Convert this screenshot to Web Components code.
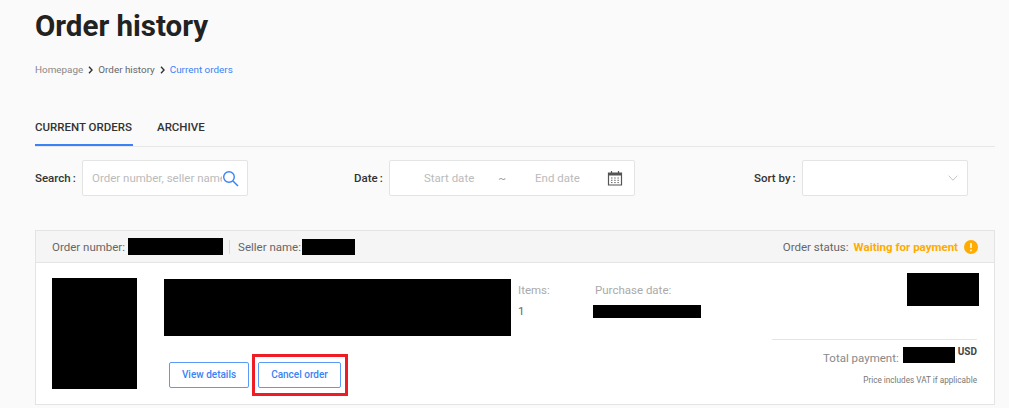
<!DOCTYPE html>
<html><head><meta charset="utf-8"><style>
html,body{margin:0;height:408px;overflow:hidden;background:#fafafa;font-family:Roboto,"Liberation Sans",sans-serif}
</style></head><body>
<order-page></order-page>
<script>
const def=(name,html)=>customElements.define(name,class extends HTMLElement{constructor(){super();this.attachShadow({mode:'open'}).innerHTML=html}});
def('page-head',`<style>:host{display:block}
h1{margin:0;font:700 29.5px/32px Roboto,sans-serif;color:#222;padding-top:10px}
nav{display:flex;align-items:center;font-size:9.9px;line-height:12px;margin-top:22px;color:#888}
svg{width:5px;height:8px;margin:0 5px 0 5px}
.m{color:#666}.c{color:#3b82f6}</style>
<h1>Order history</h1>
<nav><span>Homepage</span><svg viewBox="0 0 5 8"><path d="M1 .8 4 4 1 7.2" fill="none" stroke="#333" stroke-width="1.4"/></svg><span class="m">Order history</span><svg viewBox="0 0 5 8"><path d="M1 .8 4 4 1 7.2" fill="none" stroke="#333" stroke-width="1.4"/></svg><span class="c">Current orders</span></nav>`);
def('order-tabs',`<style>:host{display:flex;gap:24px;margin-top:33px;border-bottom:1px solid #e8e8e8;margin-right:14px;height:37px;font:500 11.5px/16px Roboto,sans-serif;color:#333}
span{display:block;padding-top:10px;height:27px;white-space:nowrap}
.a{border-bottom:2px solid #3b82f6;height:25px;width:98px}</style>
<span class="a">CURRENT ORDERS</span><span>ARCHIVE</span>`);
def('filter-box',`<style>:host{display:flex;align-items:center;box-sizing:border-box;height:36px;background:#fff;border:1px solid #e4e4e4;border-radius:2px;font-size:11.5px;color:#bbb;overflow:hidden}</style><slot></slot>`);
def('filter-bar',`<style>:host{display:flex;align-items:center;margin-top:13px;height:36px;font:500 11.5px Roboto,sans-serif;color:#333}
b{font-weight:500;white-space:nowrap}
b u{text-decoration:none;margin-left:2px}
filter-box{font-weight:400;flex:none}
.s{width:166px;padding-left:9px}
.s span{width:130px;overflow:hidden;white-space:nowrap}
.s svg{width:17px;height:17px;flex:none}
.d{width:246px;padding-left:34px}
.d svg{width:16px;height:16px;margin-left:27px}
.d i{font-style:normal;margin:0 29px 0 24px;color:#999}
.o{width:166px;justify-content:flex-end;padding-right:9px}
.o svg{width:10px;height:6px}
.l0{width:47px}.l1{margin-left:106px;width:35px}.l2{margin-left:119px;width:48px}</style>
<b class="l0">Search<u>:</u></b><filter-box class="s"><span>Order number, seller name</span><svg viewBox="0 0 17 17"><circle cx="7" cy="7" r="5.3" fill="none" stroke="#3b82f6" stroke-width="1.4"/><path d="m11 11 5 5" stroke="#3b82f6" stroke-width="1.5"/></svg></filter-box>
<b class="l1">Date<u>:</u></b><filter-box class="d"><span>Start date</span><i>~</i><span>End date</span><svg viewBox="0 0 16 16"><path d="M1.5 3h13v12h-13z" fill="none" stroke="#555" stroke-width="1.2"/><path d="M1.5 3h13v2.6h-13z" fill="#555"/><path d="M4.5 1v3M11.5 1v3" stroke="#555" stroke-width="1.2"/><path d="M4 8h1.5M7.2 8h1.5M10.4 8h1.5M4 10.3h1.5M7.2 10.3h1.5M10.4 10.3h1.5M4 12.6h1.5M7.2 12.6h1.5M10.4 12.6h1.5" stroke="#666"/></svg></filter-box>
<b class="l2">Sort by<u>:</u></b><filter-box class="o"><svg viewBox="0 0 10 6"><path d="M.7.7 5 5.3 9.3.7" fill="none" stroke="#c4c4c4"/></svg></filter-box>`);
def('redact-box',`<style>:host{display:block;background:#000;flex:none}</style>`);
def('outline-button',`<style>:host{display:block;position:relative;box-sizing:border-box;height:26px;border:1px solid #5c9bf5;border-radius:2px;background:#fff;color:#3b82f6;font:500 10px/24px Roboto,sans-serif;text-align:center}
:host([marked])::after{content:"";position:absolute;left:-7px;right:-8px;top:-9px;bottom:-9px;border:3px solid #ee1c25;pointer-events:none}</style><slot></slot>`);
def('order-card',`<style>:host{display:block;margin:34px 14px 0 0;border:1px solid #e4e4e4;background:#fff;height:175px;box-sizing:border-box;color:#666;font:400 11.5px Roboto,sans-serif}
.h{display:flex;align-items:center;background:#f5f5f5;border-bottom:1px solid #e4e4e4;padding-left:16px;box-sizing:border-box;height:32px}
.sep{width:1px;height:14px;background:#ddd;margin:0 8px 0 6px}
.st{margin-left:auto;display:flex;align-items:center;padding-right:16px}
.st b{color:#ffab00;font-weight:700;margin-left:5px}
.st svg{width:14px;height:14px;margin-left:6px}
.b{display:flex;padding:15px 15px 0 16px}
.left{width:85px;height:111px;margin-right:27px}
.mid{width:347px;margin-right:7px;flex:none;padding-top:1px}
.btns{display:flex;gap:9px;margin:26px 0 0 5px}
.info{display:flex;padding-top:4px;color:#aaa;flex:none;line-height:16px}
.items{width:75px}.items p{margin:5px 0 0;color:#666}
.pd{width:108px}
.pd span{padding-left:2px}
.right{flex:1;display:flex;flex-direction:column;align-items:flex-end;margin-top:-5px}
.tot{width:205px;margin-top:33px;border-top:1px solid #e4e4e4;margin-right:2px;display:flex;justify-content:flex-end;padding-top:7px;color:#888}
.tot b{font-size:10px;font-weight:700;color:#444;margin:-1px 0 0 3px}
.tot span{line-height:16px;margin:3px 4px 0 0}
.vat{font-size:8.2px;color:#777;margin:9px 2px 0 0}</style>
<div class="h"><span>Order number:</span><redact-box style="width:95px;height:17px;margin-left:3px"></redact-box><span class="sep"></span><span>Seller name:</span><redact-box style="width:53px;height:16px;margin-left:1px"></redact-box>
<div class="st"><span>Order status:</span><b>Waiting for payment</b><svg viewBox="0 0 14 14"><circle cx="7" cy="7" r="7" fill="#ffab00"/><path d="M7 3v5M7 9.5v1.7" stroke="#fff" stroke-width="1.6"/></svg></div></div>
<div class="b"><redact-box class="left"></redact-box>
<div class="mid"><redact-box style="height:57px"></redact-box><div class="btns"><outline-button style="width:80px">View details</outline-button><outline-button marked style="width:83px">Cancel order</outline-button></div></div>
<div class="info"><div class="items">Items:<p>1</p></div><div class="pd"><span>Purchase date:</span><redact-box style="height:13px;margin-top:7px"></redact-box></div></div>
<div class="right"><redact-box style="width:72px;height:33px"></redact-box><div class="tot"><span>Total payment:</span><redact-box style="width:52px;height:16px"></redact-box><b>USD</b></div><div class="vat">Price includes VAT if applicable</div></div>
</div>`);
def('order-page',`<style>:host{display:block;padding-left:35px}</style><page-head></page-head><order-tabs></order-tabs><filter-bar></filter-bar><order-card></order-card>`);
</script>
</body></html>
